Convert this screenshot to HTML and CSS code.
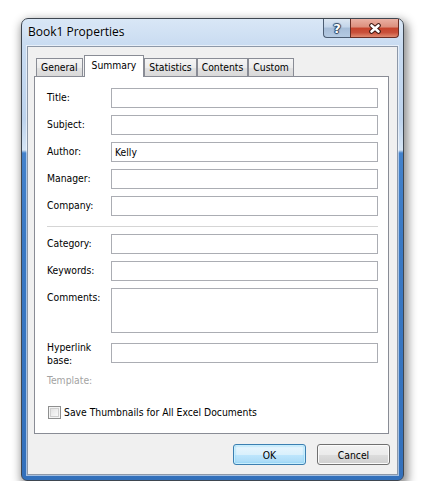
FILE: index.html
```html
<!DOCTYPE html>
<html lang="en">
<head>
<meta charset="utf-8">
<title>Book1 Properties</title>
<link rel="stylesheet" href="styles.css">
</head>
<body>
<div class="window">
  <div class="titlebar">
    <span class="title">Book1 Properties</span>
    <div class="caption">
      <span class="cbtn help">?</span>
      <span class="cbtn close">
        <svg width="14" height="11" viewBox="0 0 14 11" aria-hidden="true">
          <path d="M3.5 2.5 L10.5 8.5 M10.5 2.5 L3.5 8.5" stroke="#3b1610" stroke-width="4.6" stroke-linecap="round" fill="none"/>
          <path d="M3.5 2.5 L10.5 8.5 M10.5 2.5 L3.5 8.5" stroke="#ffffff" stroke-width="2.6" stroke-linecap="round" fill="none"/>
        </svg>
      </span>
    </div>
  </div>
  <div class="client">
    <div class="tabs">
      <span class="tab">General</span>
      <span class="tab sel">Summary</span>
      <span class="tab">Statistics</span>
      <span class="tab">Contents</span>
      <span class="tab">Custom</span>
    </div>
    <div class="panel">
      <div class="row"><span class="lbl">Title:</span><span class="field"></span></div>
      <div class="row"><span class="lbl">Subject:</span><span class="field"></span></div>
      <div class="row"><span class="lbl">Author:</span><span class="field">Kelly</span></div>
      <div class="row"><span class="lbl">Manager:</span><span class="field"></span></div>
      <div class="row"><span class="lbl">Company:</span><span class="field"></span></div>
      <div class="sep"></div>
      <div class="row"><span class="lbl">Category:</span><span class="field"></span></div>
      <div class="row"><span class="lbl">Keywords:</span><span class="field"></span></div>
      <div class="row"><span class="lbl">Comments:</span><span class="field tall"></span></div>
      <div class="row gap-top"><span class="lbl multi">Hyperlink<br>base:</span><span class="field"></span></div>
      <div class="row"><span class="lbl plain disabled">Template:</span></div>
      <div class="check-row"><span class="checkbox"></span><span class="check-label">Save Thumbnails for All Excel Documents</span></div>
    </div>
    <div class="buttons">
      <button class="btn default">OK</button>
      <button class="btn">Cancel</button>
    </div>
  </div>
</div>
</body>
</html>
```

FILE: styles.css
```css
* { box-sizing: border-box; }

body {
  margin: 0;
  background: #ffffff;
  font-family: "DejaVu Sans Condensed", "DejaVu Sans", sans-serif;
  font-size: 10.3px;
  color: #000000;
}

.window {
  margin: 18px 0 0 21px;
  width: 383px;
  height: 463px;
  border: 1px solid #3e4650;
  border-radius: 7px 7px 6px 6px;
  padding: 0 5px 5px 5px;
  display: flex;
  flex-direction: column;
  background: linear-gradient(180deg,
    #d9e7f6 0px, #c8dbf1 28px, #bdd3ed 100px, #d6e5f5 131px,
    #4482cb 134px, #3a79c4 220px, #3370bb 100%);
  box-shadow: 2px 4px 10px 2px rgba(0, 0, 0, 0.45);
}

.titlebar {
  height: 27px;
  flex-shrink: 0;
  display: flex;
  align-items: flex-start;
}

.title {
  font-family: "Open Sans", "Noto Sans", sans-serif;
  font-size: 12px;
  line-height: 16px;
  padding-top: 5px;
  padding-left: 1px;
  color: #000;
  text-shadow: 0 0 6px rgba(255, 255, 255, 0.8);
}

.caption {
  margin-left: auto;
  margin-right: -1px;
  display: flex;
}

.cbtn {
  height: 19px;
  display: flex;
  align-items: center;
  justify-content: center;
  border: 1px solid #4c5d73;
  border-top: none;
}

.help {
  width: 27px;
  border-right: none;
  border-radius: 0 0 0 4px;
  background: linear-gradient(180deg, #dbe6f2 0%, #c3d5ea 45%, #a6bdd8 50%, #b5cae2 100%);
  color: #ffffff;
  font-family: "DejaVu Sans", sans-serif;
  font-weight: bold;
  font-size: 13px;
  line-height: 13px;
  text-shadow: 0 0 1px #1f3553, 1px 0 1px #2c4565, -1px 0 1px #2c4565, 0 1px 1px #2c4565, 0 -1px 1px #2c4565;
}

.close {
  width: 49px;
  border-color: #6a2d24;
  border-radius: 0 0 4px 0;
  background: linear-gradient(180deg, #eab0a3 0%, #dc8f7d 45%, #c6432c 50%, #c9503a 75%, #e08a70 100%);
}

.client {
  flex: 1;
  display: flex;
  flex-direction: column;
  background: #f0f0f0;
  border: 1px solid rgba(60, 80, 110, 0.55);
  box-shadow: 0 0 0 1px rgba(255, 255, 255, 0.55);
  padding: 8px 8px 9px 6px;
}

.tabs {
  display: flex;
  align-items: flex-end;
  height: 22px;
  margin-bottom: -1px;
  padding-left: 2px;
  position: relative;
  z-index: 1;
}

.tab {
  height: 18px;
  margin-bottom: 1px;
  border: 1px solid #898c95;
  border-bottom: none;
  padding: 0 4px;
  line-height: 17px;
  white-space: nowrap;
  background: linear-gradient(180deg, #f5f5f5 0%, #ececec 50%, #e2e2e2 51%, #d9d9d9 100%);
}

.tab.sel {
  height: 22px;
  margin: 0 0 0 1px;
  padding: 0 7px;
  line-height: 18px;
  background: #ffffff;
}

.panel {
  flex: 1;
  background: #ffffff;
  border: 1px solid #898c95;
  padding: 11px 10px 0 12px;
  display: flex;
  flex-direction: column;
  gap: 7px;
}

.row {
  display: flex;
  align-items: flex-start;
}

.lbl {
  width: 64px;
  flex-shrink: 0;
  padding-top: 3px;
  line-height: 13px;
}

.lbl.multi {
  padding-top: 0;
  margin-top: -2px;
}

.lbl.plain { padding-top: 0; }

.lbl.disabled { color: #a3a3a3; }

.gap-top { margin-top: 3px; }

.field {
  flex: 1;
  height: 20px;
  border: 1px solid #abadb3;
  background: #ffffff;
  padding: 0 3px;
  line-height: 18px;
}

.field.tall { height: 45px; }

.sep {
  height: 1px;
  background: #d5d5d5;
  margin-top: 3px;
}

.check-row {
  margin-top: 12px;
  display: flex;
  align-items: center;
  line-height: 13px;
}

.checkbox {
  width: 13px;
  height: 13px;
  margin-left: 1px;
  border: 1px solid #8e8f8f;
  background: linear-gradient(135deg, #dcdcdc 0%, #f2f2f2 60%, #fdfdfd 100%);
  box-shadow: inset 0 0 0 1px #f4f4f4, inset 0 0 0 2px #cfcfcf;
}

.check-label { margin-left: 3px; }

.buttons {
  display: flex;
  justify-content: flex-end;
  gap: 11px;
  margin-top: 10px;
  margin-right: -1px;
  height: 21px;
  flex-shrink: 0;
}

.btn {
  width: 73px;
  height: 21px;
  padding: 0;
  font: inherit;
  color: #000;
  border: 1px solid #707070;
  border-radius: 3px;
  background: linear-gradient(180deg, #f2f2f2 0%, #ebebeb 50%, #dddddd 51%, #cfcfcf 100%);
  box-shadow: inset 0 0 0 1px #fbfbfb;
}

.btn.default {
  border-color: #3c7fb1;
  background: linear-gradient(180deg, #eaf6fd 0%, #d9f0fc 50%, #bee6fd 51%, #a7d9f5 100%);
  box-shadow: inset 0 0 0 1px #c8eefd, inset 0 0 2px 1px #7fd0f5;
}
```
